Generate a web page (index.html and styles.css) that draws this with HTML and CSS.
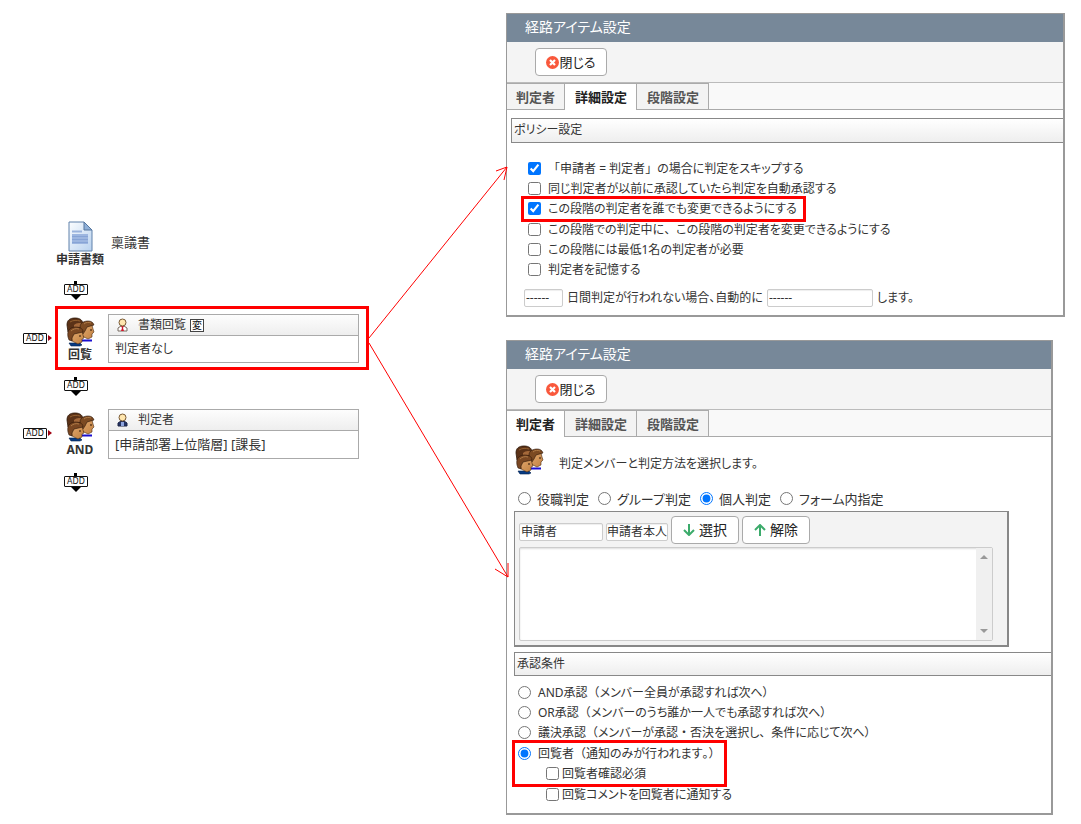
FILE: index.html
```
<!DOCTYPE html>
<html lang="ja">
<head>
<meta charset="utf-8">
<title>経路アイテム設定</title>
<link rel="stylesheet" href="styles.css">
</head>
<body>
<svg class="defs" width="0" height="0" aria-hidden="true">
  <defs>
    <linearGradient id="page" x1="0" y1="0" x2="1" y2="1"><stop offset="0" stop-color="#fbfdff"/><stop offset="1" stop-color="#b9d2ef"/></linearGradient>
    <linearGradient id="skin" x1="0" y1="0" x2="1" y2="1"><stop offset="0" stop-color="#e2a86e"/><stop offset="1" stop-color="#c08040"/></linearGradient>
  </defs>
  <symbol id="people" viewBox="0 0 29 30">
    <path d="M1 8C1 3 4 1 9 1c5 0 8 2 8 7l-2 4-8 1-5 2Z" fill="#5b3217" stroke="#2c1608" stroke-width=".8"/>
    <path d="M8 8c2-2 6-3 8-1v3H8Z" fill="#a5693a"/>
    <path d="M4 5c3-2 7-2 10-1" stroke="#94602f" fill="none"/>
    <path d="M16 23.500h10" stroke="#1a0fd0" stroke-width="2"/>
    <path d="M17 12 20 9 26 8 27 12 28 15 26 17 26 20 22 22 16 19Z" fill="url(#skin)" stroke="#4a2a10" stroke-width=".6"/>
    <path d="M14 10c0-4 4-6 8-6 3 0 5 1 6 4l-7 2-2 4-2 3-3-3Z" fill="#7c4a22" stroke="#2c1608" stroke-width=".6"/>
    <path d="M3 26h11l2 2-2 1H5Z" fill="#073b83" stroke="#04214f" stroke-width=".6"/>
    <path d="M5 18 8 15 16 14 17 18 18 21 16 22 16 25 12 27 6 24Z" fill="url(#skin)" stroke="#4a2a10" stroke-width=".6"/>
    <path d="M2 20c-1-6 1-9 7-10 4 0 8 1 8 5l-9 2-2 4 0 3-3-1Z" fill="#7a4722" stroke="#2c1608" stroke-width=".6"/>
    <path d="M5 14c2-2 5-3 8-2M18 7c2-2 5-2 7-1" stroke="#b07c48" fill="none"/>
    <path d="M13 19h2M24 13h2" stroke="#291307"/>
  </symbol>
  <symbol id="close" viewBox="0 0 13 13">
    <circle cx="6.5" cy="6.5" r="6.5" fill="#f9583c"/>
    <path d="M4 4l5 5M9 4l-5 5" stroke="#fff" stroke-width="2.2"/>
  </symbol>
</svg>
<main class="page">
  <section class="flow">
    <div class="node start">
      <div class="icon">
        <svg width="25" height="31" viewBox="0 0 25 31"><path d="M1 1h15l8 8v21H1Z" fill="url(#page)" stroke="#5f80aa"/><path d="M16 1v8h8Z" fill="#8fb0d8" stroke="#56779f"/><path d="M4 10.500h10" stroke="#9ab3dc" stroke-width="2"/><path d="M4 13h16v10H4Z" fill="#9db6e0"/><path d="M4 15.500h16M4 18.500h16M4 21.500h16" stroke="#87a4d6"/></svg>
        <b>申請書類</b>
      </div>
      <span class="docname">稟議書</span>
    </div>
    <div class="down first"><button class="add">ADD</button></div>
    <div class="row">
      <button class="add side">ADD</button>
      <div class="node marked">
        <div class="icon"><svg width="29" height="30"><use href="#people"/></svg><b>回覧</b></div>
        <div class="card">
          <div class="card-head">
            <svg width="11" height="14" viewBox="0 0 11 14"><path d="M1 13V10L4 8h3l3 2v3Z" fill="#fff" stroke="#776b60"/><path d="M4 8h3L6 10l1 3H4l1-3Z" fill="#d5162b"/><circle cx="5.500" cy="4.500" r="3.500" fill="#ffe6ae" stroke="#795a36"/></svg>
            <span>書類回覧</span><span class="badge">変</span>
          </div>
          <div class="card-body">判定者なし</div>
        </div>
      </div>
    </div>
    <div class="down"><button class="add">ADD</button></div>
    <div class="row">
      <button class="add side">ADD</button>
      <div class="node">
        <div class="icon"><svg width="29" height="30"><use href="#people"/></svg><b>AND</b></div>
        <div class="card">
          <div class="card-head">
            <svg width="11" height="14" viewBox="0 0 11 14"><path d="M1 13V10L4 8h3l3 2v3Z" fill="#243365" stroke="#1c2547"/><path d="M4 9h3v4H4Z" fill="#8fa5dd"/><circle cx="5.500" cy="4.500" r="3.500" fill="#ffe6ae" stroke="#795a36"/></svg>
            <span>判定者</span>
          </div>
          <div class="card-body big">[申請部署上位階層] [課長]</div>
        </div>
      </div>
    </div>
    <div class="down"><button class="add">ADD</button></div>
  </section>

  <div class="panels">
    <section class="panel">
      <h2>経路アイテム設定</h2>
      <div class="toolbar"><button class="btn"><svg width="13" height="13"><use href="#close"/></svg>閉じる</button></div>
      <nav class="tabs"><button>判定者</button><button class="on">詳細設定</button><button>段階設定</button></nav>
      <h3 class="group">ポリシー設定</h3>
      <div class="checks">
        <label><input type="checkbox" checked><span><span class="w">「</span>申請者 = 判定者<span class="w">」</span>の場合に判定をスキップする</span></label>
        <label><input type="checkbox">同じ判定者が以前に承認していたら判定を自動承認する</label>
        <label class="hot"><input type="checkbox" checked>この段階の判定者を誰でも変更できるようにする</label>
        <label><input type="checkbox"><span>この段階での判定中に<span class="w">、</span>この段階の判定者を変更できるようにする</span></label>
        <label><input type="checkbox">この段階には最低1名の判定者が必要</label>
        <label><input type="checkbox">判定者を記憶する</label>
      </div>
      <div class="auto">
        <input class="field days" id="days" value="------"><label for="days">日間判定が行われない場合、自動的に</label>
        <input class="field action" id="action" value="------"><label for="action">します。</label>
      </div>
    </section>

    <section class="panel second">
      <h2>経路アイテム設定</h2>
      <div class="toolbar"><button class="btn"><svg width="13" height="13"><use href="#close"/></svg>閉じる</button></div>
      <nav class="tabs"><button class="on">判定者</button><button>詳細設定</button><button>段階設定</button></nav>
      <div class="lead"><svg width="29" height="30"><use href="#people"/></svg><span>判定メンバーと判定方法を選択します。</span></div>
      <div class="kinds">
        <label><input type="radio" name="kind">役職判定</label>
        <label><input type="radio" name="kind">グループ判定</label>
        <label><input type="radio" name="kind" checked>個人判定</label>
        <label><input type="radio" name="kind">フォーム内指定</label>
      </div>
      <div class="picker">
        <div class="picker-bar">
          <input class="field who" aria-label="区分" value="申請者"><input class="field self" aria-label="対象" value="申請者本人">
          <button class="btn"><svg width="12" height="12" viewBox="0 0 12 12"><path d="M6 0v11M1 6l5 5 5-5" fill="none" stroke="#3cab6b" stroke-width="2"/></svg>選択</button>
          <button class="btn"><svg width="12" height="12" viewBox="0 0 12 12"><path d="M6 12V1M1 6l5-5 5 5" fill="none" stroke="#3cab6b" stroke-width="2"/></svg>解除</button>
        </div>
        <div class="list">
          <textarea aria-label="判定メンバー"></textarea>
          <div class="scroll"><i class="up"></i><i class="dn"></i></div>
        </div>
      </div>
      <h3 class="group">承認条件</h3>
      <div class="conds">
        <label><input type="radio" name="cond"><span>AND承認<span class="w">（</span>メンバー全員が承認すれば次へ）</span></label>
        <label><input type="radio" name="cond"><span>OR承認<span class="w">（</span>メンバーのうち誰か一人でも承認すれば次へ）</span></label>
        <label><input type="radio" name="cond"><span>議決承認<span class="w">（</span>メンバーが承認<span class="w">・</span>否決を選択し<span class="w">、</span>条件に応じて次へ）</span></label>
        <div class="hotbox">
          <label><input type="radio" name="cond" checked><span>回覧者<span class="w">（</span>通知のみが行われます<span class="w">。）</span></span></label>
          <label class="sub"><input type="checkbox">回覧者確認必須</label>
        </div>
        <label class="sub"><input type="checkbox">回覧コメントを回覧者に通知する</label>
      </div>
    </section>
  </div>

  <svg class="arrows" width="520" height="600" viewBox="0 0 520 600" aria-hidden="true">
    <path d="M369 338 507 167M496 171l11-4-3 13M369 343 508 577M508 563v14l-13-8" fill="none" stroke="#f00" stroke-width="1"/>
  </svg>
</main>
</body>
</html>
```
FILE: styles.css
```
* { box-sizing: border-box; }
body {
  margin: 0;
  background: #fff;
  color: #333;
  font: 12px/20px "Noto Sans", "Noto Sans CJK JP", sans-serif;
  font-feature-settings: "palt";
}
button, input, textarea { font: inherit; color: inherit; font-feature-settings: inherit; margin: 0; }
svg { display: block; flex: none; }
.w { font-feature-settings: normal; }
.defs { position: absolute; }
.page { position: relative; display: flex; padding: 13px 16px 10px 0; }
.arrows { position: absolute; left: 0; top: 0; pointer-events: none; }

/* route diagram */
.flow { flex: none; width: 506px; padding-top: 208px; }
.node { display: flex; width: 314px; }
.row { display: flex; align-items: center; padding-left: 23px; }
.row .node { flex: none; padding: 8px 10px 7px; }
.row .marked { border: 3px solid #f00; padding: 5px 7px 4px; }
.start { margin-left: 55px; padding: 0 0 0 2px; }
.icon { flex: none; display: flex; flex-direction: column; align-items: center; }
.icon b { line-height: 16px; white-space: nowrap; }
.row .icon { width: 43px; padding: 3px 13px 0 0; height: 49px; }
.start .icon { width: 46px; margin-right: 8px; }
.docname { font-size: 13px; line-height: 42px; }
.add {
  position: relative;
  flex: none;
  width: 24px;
  height: 11px;
  padding: 0;
  border: 1px solid #111;
  border-radius: 1px;
  background: #fff;
  color: #111;
  font: 8px/9px "DejaVu Sans", sans-serif;
}
.down { display: flex; align-items: center; height: 31px; padding-left: 64px; }
.first { height: 38px; padding-top: 4px; }
.down .add::before { content: ""; position: absolute; left: 9px; top: -4px; width: 3px; height: 3px; background: #000; }
.down .add::after { content: ""; position: absolute; left: 6px; top: 10px; border: 5px solid transparent; border-width: 0 5px; border-top: 5px solid #000; }
.side { margin-right: 8px; }
.side::after { content: ""; position: absolute; left: 24px; top: 1px; border: 3px solid transparent; border-left: 4px solid #a00010; border-right: 0; }
.card { flex: 1; border: 1px solid #aaa; }
.card-head {
  display: flex;
  align-items: center;
  height: 21px;
  padding-left: 8px;
  border-bottom: 1px solid #aaa;
  background: linear-gradient(#fdfdfd, #eee);
}
.card-head svg { margin-right: 10px; }
.badge { margin-left: 4px; width: 14px; height: 13px; border: 1px solid #444; font-size: 10px; line-height: 11px; text-align: center; color: #111; background: #fff; }
.card-body { padding: 2px 6px; height: 25px; line-height: 22px; }
.big { font-size: 13px; height: 27px; }

/* settings panels */
.panels { flex: 1; min-width: 0; display: flex; flex-direction: column; gap: 23px; }
.panel { border: 1px solid #999; border-width: 1px 2px 2px 1px; background: #fff; }
.second { margin-right: 12px; }
.panel h2 { margin: 0; height: 28px; padding: 0 18px; background: #778899; color: #fff; font-size: 14px; font-weight: 400; line-height: 26px; }
.toolbar { padding: 6px 28px; height: 41px; background: #f4f4f4; border-bottom: 1px solid #bbb; }
.btn {
  display: inline-flex;
  align-items: center;
  justify-content: center;
  width: 72px;
  height: 28px;
  padding: 0;
  border: 1px solid #aaa;
  border-radius: 4px;
  background: #fff;
  color: #222;
  font-size: 14px;
}
.toolbar .btn { font-size: 13px; }
.tabs { display: flex; height: 27px; background: #f9f9f9; border-bottom: 1px solid #aaa; }
.tabs button {
  padding: 0 9px;
  height: 26px;
  border: 1px solid #aaa;
  border-width: 1px 1px 0 0;
  background: #f3f3f3;
  color: #555;
  font-size: 13px;
  font-weight: 700;
}
.tabs button + button { padding: 0 9px 0 10px; }
.tabs .on { height: 27px; background: #fff; color: #222; }
.group {
  margin: 8px 0 0 4px;
  height: 25px;
  padding: 0 2px;
  border: 1px solid #888;
  border-right: 0;
  background: linear-gradient(#fff, #eee);
  font-size: 12px;
  font-weight: 400;
  line-height: 22px;
}
label { white-space: nowrap; }
input[type="checkbox"], input[type="radio"] { flex: none; width: 13px; height: 13px; margin-bottom: 2px; }
.checks { display: flex; flex-direction: column; align-items: flex-start; padding: 16px 0 0 21px; }
.checks label { display: flex; align-items: center; gap: 7px; height: 20px; }
.checks .hot { height: 26px; margin: -3px 0 -2px -7px; padding: 0 6px 0 4px; border: 3px solid #f00; }
.field { height: 18px; padding: 0 1px; border: 1px solid #ccc; border-radius: 2px; box-shadow: inset 0 1px 1px #eee; background: #fff; }
.auto { display: flex; align-items: center; gap: 4px; padding: 8px 0 8px 17px; height: 35px; }
.days { width: 39px; }
.action { width: 106px; }

.lead { display: flex; align-items: center; gap: 15px; padding: 8px 8px 0; }
.lead span { padding-top: 8px; }
.kinds { display: flex; gap: 9px; padding: 13px 11px 0; font-size: 13px; }
.kinds label { display: flex; align-items: center; gap: 6px; height: 22px; }
.picker { width: 495px; margin: 1px 0 0 7px; padding: 4px; border: 1px solid #888; border-width: 1px 2px 2px 1px; background: #f3f3f3; }
.picker-bar { display: flex; align-items: center; gap: 3px; }
.picker-bar .field { margin-top: 4px; }
.picker-bar .btn { width: 68px; gap: 4px; }
.who { width: 84px; }
.self { width: 62px; padding: 0; }
.list { display: flex; width: 474px; height: 94px; margin: 3px 0 0; border: 1px solid #ccc; border-radius: 2px; background: #fff; box-shadow: inset 0 1px 2px #ddd; }
.list textarea { flex: 1; border: 0; padding: 2px; resize: none; background: transparent; }
.scroll { display: flex; flex-direction: column; justify-content: space-between; align-items: center; width: 16px; padding: 7px 0; background: #f0f0f0; }
.scroll i { border: 0 solid transparent; border-width: 0 4px; }
.scroll .up { border-bottom: 4px solid #999; }
.scroll .dn { border-top: 4px solid #999; }
.second .group { margin: 5px 0 0 7px; height: 24px; }
.conds { display: flex; flex-direction: column; align-items: flex-start; padding: 7px 0 8px 11px; }
.conds label { display: flex; align-items: center; gap: 7px; height: 20px; }
.conds .sub { padding-left: 28px; gap: 3px; }
.hotbox { margin: -3px 0 -2px -6px; padding: 1px 3px 0; border: 3px solid #f00; }
```
